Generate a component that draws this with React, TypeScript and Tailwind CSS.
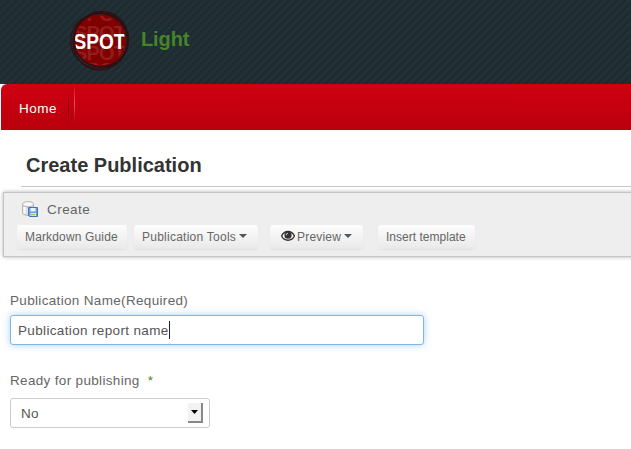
import type { ReactNode } from "react";

function SpotLogo() {
  return (
    <svg width="62" height="64" viewBox="0 0 62 64" className="shrink-0">
      <defs>
        <clipPath id="disc">
          <circle cx="31" cy="31.5" r="25" />
        </clipPath>
      </defs>
      <circle cx="31" cy="31.5" r="26" fill="#800000" />
      <g clipPath="url(#disc)" fontFamily="Liberation Sans, sans-serif" fontWeight="bold" fontSize="20">
        <g fill="#931c1c">
          <text x="5" y="12" textLength="52">SPOT</text>
          <text x="5" y="31" textLength="52">SPOT</text>
          <text x="5" y="51" textLength="52">SPOT</text>
          <text x="5" y="68" textLength="52">SPOT</text>
        </g>
        <text x="4.5" y="39.5" fill="#fff" fontSize="22" textLength="52" lengthAdjust="spacingAndGlyphs">SPOT</text>
      </g>
      <g fill="none" stroke="#330d10">
        <circle cx="32" cy="31" r="27" strokeWidth="1.4" />
        <ellipse cx="30" cy="32" rx="28.3" ry="27.5" strokeWidth="1.1" />
        <ellipse cx="32" cy="31.5" rx="27.5" ry="29.5" strokeWidth="1.2" transform="rotate(20 31 31)" />
      </g>
    </svg>
  );
}

function DatabaseSaveIcon() {
  return (
    <svg width="17" height="17" viewBox="0 0 17 17" className="shrink-0">
      <path d="M.5 3.2v8.6c0 1.5 2.5 2.6 5.5 2.6s5.5-1.1 5.5-2.6V3.2z" fill="#e0e0e0" stroke="#b5b5b5" />
      <path d="M2.5 6v6.5" stroke="#fff" strokeWidth="2" />
      <ellipse cx="6" cy="3.2" rx="5.5" ry="2.6" fill="#f8f8f8" stroke="#b5b5b5" />
      <path d="M6.5 6.5h9v9h-8l-1-1z" fill="#6b9be2" stroke="#4273c2" />
      <path d="M8.5 7h5v3.5h-5z" fill="#eaf2fd" />
      <path d="M8.5 12h5.5v3H8.5z" fill="#f4f8ee" />
      <path d="M9 12.8h4.5v1.6H9z" fill="#83d03f" />
    </svg>
  );
}

function Eye() {
  return (
    <svg width="14" height="12" viewBox="0 0 14 12" className="mb-[2px] mr-[2px] shrink-0">
      <path d="M.6 6C2 2.7 4.3 1.5 7 1.5S12 2.7 13.4 6C12 9 9.7 10.2 7 10.2S2 9 .6 6z" fill="#f8f8f8" stroke="#333" strokeWidth="1.4" />
      <circle cx="7" cy="5.2" r="3.6" fill="#333" />
      <path d="M5.2 5.2C5.2 4 6 3.4 7 3.4" fill="none" stroke="#fff" strokeWidth=".9" />
    </svg>
  );
}

function Caret() {
  return (
    <svg width="8" height="4" viewBox="0 0 8 4" className="mb-[2px] ml-[3px] shrink-0">
      <path d="M0 0h8L4 4z" fill="#555" />
    </svg>
  );
}

function ToolButton({ className, children }: { className: string; children: ReactNode }) {
  return (
    <button
      className={`flex h-6 shrink-0 items-center whitespace-nowrap rounded-[3px] bg-gradient-to-b from-[#fdfdfd] to-[#e9e9e9] text-[12px] text-[#666] shadow-[0_1px_2px_rgba(0,0,0,0.06)] ${className}`}
    >
      {children}
    </button>
  );
}

export default function App() {
  return (
    <div className="h-[449px] w-full overflow-hidden bg-white font-['Liberation_Sans',Arial,sans-serif] text-[13.5px] text-[#666]">
      <header className="flex h-[84px] bg-[#1f2d32] bg-[repeating-linear-gradient(135deg,#1e2c31_0px,#1e2c31_2px,#233237_3px,#233237_4px,#1e2c31_5.657px)] pl-[69px] pt-[9px]">
        <SpotLogo />
        <span className="ml-[10px] mt-[18px] text-[20px] font-bold leading-6 tracking-[-0.1px] text-[#46832b]">Light</span>
      </header>
      <nav className="ml-px flex h-[46px] rounded-tl-[6px] bg-gradient-to-b from-[#cf0011] to-[#b9000d] pl-[18px]">
        <a className="w-[49px] pt-[17px] leading-4 tracking-[0.5px] text-white">Home</a>
        <i className="mt-2 h-[34px] w-px bg-gradient-to-b from-transparent via-[#810008] to-transparent" />
        <i className="ml-[5px] h-[38px] w-px bg-gradient-to-b from-transparent via-[#e95361] to-transparent" />
      </nav>
      <h1 className="ml-[21px] h-[57px] border-b border-[#c8c8c8] pl-[5px] pt-[23px] text-[20px] font-bold leading-6 text-[#333]">
        Create Publication
      </h1>
      <section className="-mr-2 ml-[3px] mt-[5px] h-[65px] border border-[#c4c4c4] bg-[#eee] shadow-[0_0_4px_rgba(0,0,0,0.3)]">
        <div className="flex h-8 items-start pl-[18px] pt-2">
          <DatabaseSaveIcon />
          <span className="ml-2 pt-px leading-4 tracking-[0.45px]">Create</span>
        </div>
        <div className="flex pl-[13px]">
          <ToolButton className="w-[110px] pl-2 tracking-[0.15px]">Markdown Guide</ToolButton>
          <ToolButton className="ml-[7px] w-[124px] pl-2 tracking-[0.25px]">Publication Tools<Caret /></ToolButton>
          <ToolButton className="ml-3 w-[93px] pl-[11px] tracking-[0.2px]"><Eye />Preview<Caret /></ToolButton>
          <ToolButton className="ml-[15px] w-[97px] pl-2 tracking-[0.02px]">Insert template</ToolButton>
        </div>
      </section>
      <form className="pl-[10px] pt-[36px]">
        <label className="block h-[22px] leading-4 tracking-[0.33px]">Publication Name(Required)</label>
        <div className="flex h-[30px] w-[414px] items-center rounded-[3px] border border-[#7db7e8] bg-white pl-[7px] tracking-[0.35px] text-[#555] shadow-[0_0_7px_rgba(82,168,236,0.5)]">
          <span className="pt-[2px]">Publication report name</span><span className="h-[18px] w-px bg-[#222]" />
        </div>
        <label className="mt-[28px] block h-[25px] leading-4 tracking-[0.33px]">
          Ready for publishing <span className="ml-1 text-[#46832b]">*</span>
        </label>
        <div className="flex h-[30px] w-[200px] items-center justify-between rounded-[3px] border border-[#ccc] bg-white pl-[10px] pr-[6px] tracking-[0.3px] text-[#555]">
          <span className="pt-[2px]">No</span>
          <span className="flex h-5 w-[15px] items-center justify-center border-b-2 border-r-2 border-[#888] bg-[#f2f2f2]">
            <svg width="7" height="4" viewBox="0 0 7 4"><path d="M0 0h7L3.5 4z" fill="#000" /></svg>
          </span>
        </div>
      </form>
    </div>
  );
}
